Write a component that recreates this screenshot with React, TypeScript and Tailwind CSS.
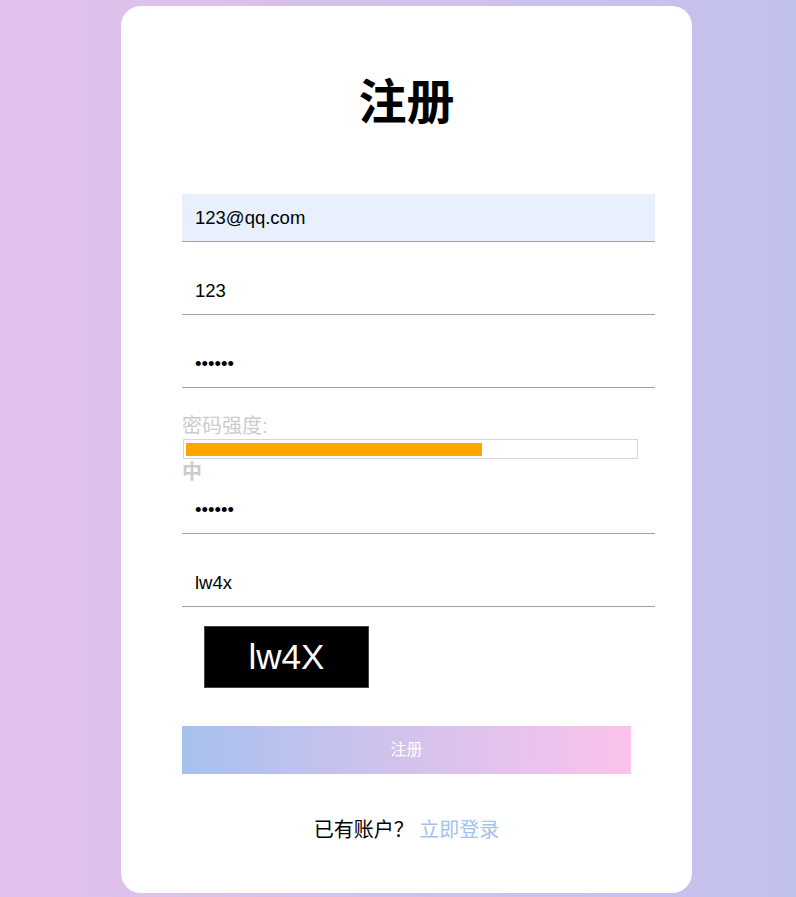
import React from "react";

const font = { fontFamily: '"Liberation Sans", "Noto Sans CJK SC", sans-serif' };

function Field({ value, type = "text", bg = false, last = false }: { value: string; type?: string; bg?: boolean; last?: boolean }) {
  return (
    <input
      readOnly
      type={type}
      defaultValue={value}
      className={`block w-[473px] h-[48px] border-0 border-b border-solid border-b-[#a0a0a0] pl-[13px] pr-3 text-[18.5px] text-black outline-none ${bg ? "bg-[#e8f0fe]" : "bg-white"} ${last ? "" : "mb-[25px]"}`}
      style={font}
    />
  );
}

export default function App() {
  return (
    <div className="min-h-[897px] w-full bg-gradient-to-r from-[#e2c1eb] to-[#c1c1ed] pt-[6px] pb-[4px]" style={font}>
      <div className="ml-[121px] w-[571px] h-[887px] bg-white rounded-[20px] pt-[69px] pl-[61px]">
        <h1 className="w-[449px] text-center text-[48px] leading-[56px] font-bold text-black mb-[63px]">注册</h1>
        <Field value="123@qq.com" bg />
        <Field value="123" />
        <Field value="123456" type="password" />
        <div className="text-[20px] leading-[26px] text-[#cccccc]">密码强度:</div>
        <div className="ml-[1px] w-[455px] h-[20px] border border-[#d6d6d6] pt-[3px] pl-[2px]">
          <div className="h-[13px] w-[296px] bg-[#ffa500]" />
        </div>
        <div className="text-[20px] leading-[27px] font-bold text-[#cccccc]">中</div>
        <Field value="123456" type="password" />
        <Field value="lw4x" last />
        <div className="mt-[19px] ml-[22px] w-[165px] h-[62px] bg-black border border-[#444] flex items-center justify-center text-white text-[35px]">
          lw4X
        </div>
        <button
          className="mt-[38px] block w-[449px] h-[48px] bg-gradient-to-r from-[#a6c1ee] to-[#fbc2eb] text-white text-[16px]"
          style={font}
        >
          注册
        </button>
        <div className="mt-[44px] w-[449px] text-center text-[20px] leading-[24px] text-black">
          已有账户？ <span className="text-[#a6c1ee]">立即登录</span>
        </div>
      </div>
    </div>
  );
}
